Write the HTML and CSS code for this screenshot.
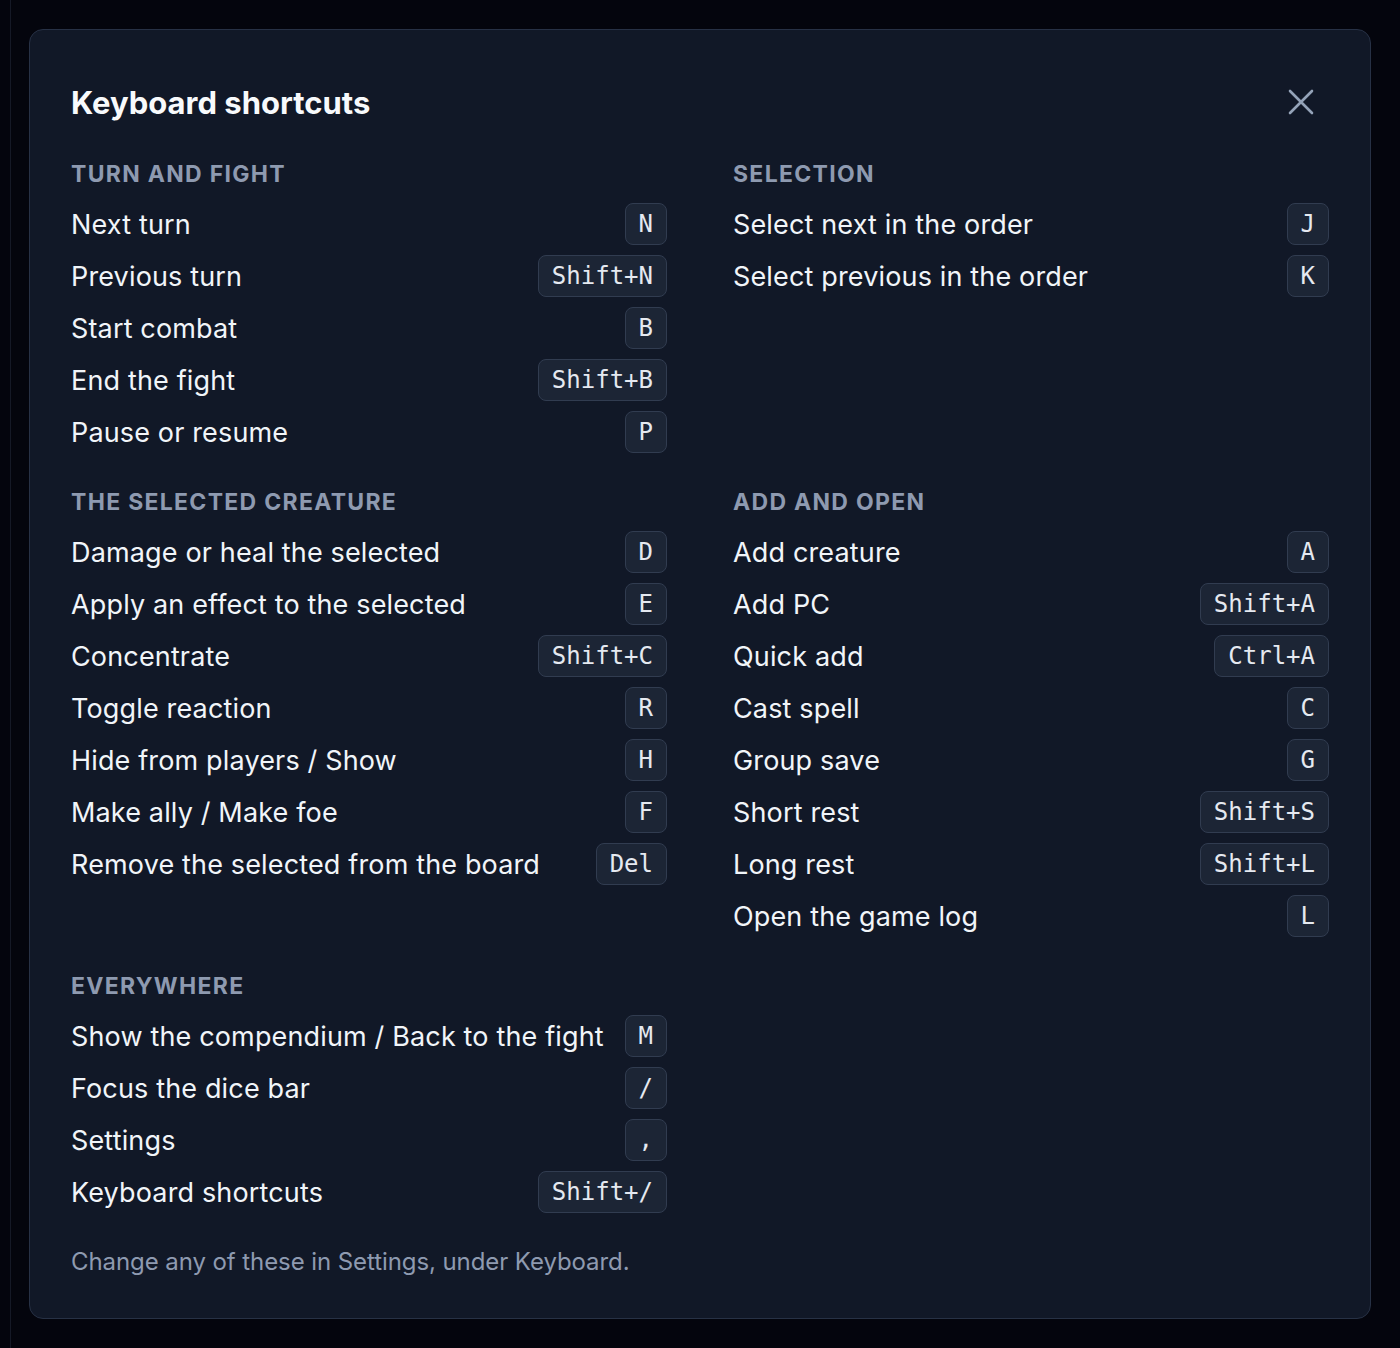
FILE: index.html
```html
<!DOCTYPE html>
<html>
<head>
    <title>Keyboard shortcuts</title>
    <link rel="stylesheet" href="styles.css">
</head>
<body>
    <div class="backdrop">
        <div class="modal">
            <div class="modal-header">
                <h2>Keyboard shortcuts</h2>
                <button class="close" aria-label="Close">
                    <svg width="26" height="26" viewBox="0 0 26 26"><path d="M2 2L24 24M24 2L2 24" stroke="currentColor" stroke-width="2.6" stroke-linecap="round"/></svg>
                </button>
            </div>

            <div class="sections">
                <div class="section">
                    <h3>Turn and fight</h3>
                    <ul>
                        <li><span>Next turn</span><kbd>N</kbd></li>
                        <li><span>Previous turn</span><kbd>Shift+N</kbd></li>
                        <li><span>Start combat</span><kbd>B</kbd></li>
                        <li><span>End the fight</span><kbd>Shift+B</kbd></li>
                        <li><span>Pause or resume</span><kbd>P</kbd></li>
                    </ul>
                </div>
                <div class="section">
                    <h3>Selection</h3>
                    <ul>
                        <li><span>Select next in the order</span><kbd>J</kbd></li>
                        <li><span>Select previous in the order</span><kbd>K</kbd></li>
                    </ul>
                </div>
                <div class="section">
                    <h3>The selected creature</h3>
                    <ul>
                        <li><span>Damage or heal the selected</span><kbd>D</kbd></li>
                        <li><span>Apply an effect to the selected</span><kbd>E</kbd></li>
                        <li><span>Concentrate</span><kbd>Shift+C</kbd></li>
                        <li><span>Toggle reaction</span><kbd>R</kbd></li>
                        <li><span>Hide from players / Show</span><kbd>H</kbd></li>
                        <li><span>Make ally / Make foe</span><kbd>F</kbd></li>
                        <li><span>Remove the selected from the board</span><kbd>Del</kbd></li>
                    </ul>
                </div>
                <div class="section">
                    <h3>Add and open</h3>
                    <ul>
                        <li><span>Add creature</span><kbd>A</kbd></li>
                        <li><span>Add PC</span><kbd>Shift+A</kbd></li>
                        <li><span>Quick add</span><kbd>Ctrl+A</kbd></li>
                        <li><span>Cast spell</span><kbd>C</kbd></li>
                        <li><span>Group save</span><kbd>G</kbd></li>
                        <li><span>Short rest</span><kbd>Shift+S</kbd></li>
                        <li><span>Long rest</span><kbd>Shift+L</kbd></li>
                        <li><span>Open the game log</span><kbd>L</kbd></li>
                    </ul>
                </div>
                <div class="section">
                    <h3>Everywhere</h3>
                    <ul>
                        <li><span>Show the compendium / Back to the fight</span><kbd>M</kbd></li>
                        <li><span>Focus the dice bar</span><kbd>/</kbd></li>
                        <li><span>Settings</span><kbd>,</kbd></li>
                        <li><span>Keyboard shortcuts</span><kbd>Shift+/</kbd></li>
                    </ul>
                </div>
            </div>

            <p class="hint">Change any of these in Settings, under Keyboard.</p>
        </div>
    </div>
</body>
</html>
```

FILE: styles.css
```css
html, body {
    margin: 0;
    background-color: #04050d;
}
body {
    font-family: Inter, "Noto Sans", sans-serif;
    color: #f1f5f9;
}
.backdrop {
    margin-left: 10px;
    border-left: 1px solid #151926;
    padding: 29px 29px 29px 18px;
    min-height: 1348px;
    box-sizing: border-box;
}
.modal {
    background-color: #111827;
    border: 1px solid #273145;
    border-radius: 14px;
    padding: 42px 41px 42px 41px;
}
.modal-header {
    display: flex;
    justify-content: space-between;
    align-items: center;
    height: 60px;
    margin-bottom: 28px;
}
.modal-header h2 {
    margin: 0;
    font-size: 31px;
    font-weight: 700;
    color: #f8fafc;
}
.close {
    width: 40px;
    height: 40px;
    margin-right: 8px;
    padding: 0;
    border: none;
    background: none;
    color: #94a3b8;
    display: flex;
    align-items: center;
    justify-content: center;
    cursor: pointer;
}
.sections {
    display: grid;
    grid-template-columns: minmax(0, 1fr) minmax(0, 1fr);
    column-gap: 66px;
    row-gap: 35px;
}
.section {
    min-width: 0;
}
.section h3 {
    margin: 0 0 15px;
    font-size: 23px;
    line-height: 28px;
    font-weight: 700;
    letter-spacing: 1.3px;
    text-transform: uppercase;
    color: #8e9ab0;
}
.section ul {
    list-style: none;
    margin: 0;
    padding: 0;
    display: flex;
    flex-direction: column;
    gap: 10px;
}
.section li {
    display: flex;
    justify-content: space-between;
    align-items: center;
    gap: 18px;
    height: 42px;
    font-size: 27px;
    letter-spacing: 0.15px;
}
.section li span {
    min-width: 0;
    white-space: nowrap;
    overflow: hidden;
    text-overflow: ellipsis;
}
kbd {
    flex-shrink: 0;
    box-sizing: border-box;
    height: 42px;
    min-width: 41px;
    padding: 0 13px;
    display: flex;
    align-items: center;
    justify-content: center;
    font-family: "DejaVu Sans Mono", "Liberation Mono", monospace;
    font-size: 24px;
    letter-spacing: 0;
    color: #e5e9f0;
    background-color: #1c2535;
    border: 1px solid #313c50;
    border-radius: 8px;
}
.hint {
    margin: 35px 0 0;
    font-size: 24px;
    line-height: 28px;
    letter-spacing: -0.08px;
    color: #8e9ab0;
}
```
